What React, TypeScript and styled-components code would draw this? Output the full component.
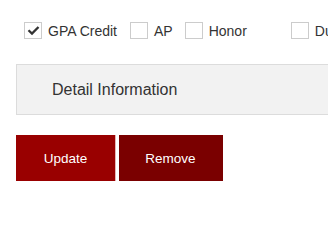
import styled, { createGlobalStyle } from "styled-components";

const GlobalStyle = createGlobalStyle`
    html, body {
        margin: 0;
        padding: 0;
        background: #fff;
        overflow: hidden;
    }
    body {
        font-family: "Liberation Sans", Arial, sans-serif;
        color: #333;
    }
`;

const Page = styled.div`
    width: 328px;
    height: 208px;
    padding: 22px 0 0 16px;
    box-sizing: border-box;
`;

const OptionRow = styled.div`
    display: flex;
    align-items: center;
    height: 17px;
    padding-left: 8px;
    white-space: nowrap;
`;

const Option = styled.label<{ spacing: number }>`
    display: flex;
    align-items: center;
    gap: 6px;
    margin-right: ${(p) => p.spacing}px;
    font-size: 14px;
    color: #333;
`;

const Box = styled.span`
    width: 16px;
    height: 15px;
    border: 1px solid #ccc;
    background: #fff;
    display: flex;
    align-items: center;
    justify-content: center;
`;

const DetailPanel = styled.div`
    margin-top: 25px;
    width: 420px;
    height: 51px;
    box-sizing: border-box;
    background: #f2f2f2;
    border: 1px solid #dcdcdc;
    display: flex;
    align-items: center;
    padding-left: 35px;
    font-size: 16px;
    color: #333;
`;

const Actions = styled.div`
    display: flex;
    gap: 3px;
    margin-top: 20px;
`;

const Button = styled.button<{ dark?: boolean; width: number }>`
    width: ${(p) => p.width}px;
    height: 46px;
    border: none;
    border-right: 1px solid ${(p) => (p.dark ? "#7a0000" : "#e8b4b4")};
    background: ${(p) => (p.dark ? "#7a0000" : "#990000")};
    color: #fff;
    font-family: "Liberation Sans", Arial, sans-serif;
    font-size: 13.5px;
    padding: 0;
`;

const Check = () => (
    <svg width="13" height="11" viewBox="0 0 13 11">
        <path d="M1.5 5.2 L5 8.6 L11.5 2" fill="none" stroke="#333" strokeWidth="2.3" />
    </svg>
);

const App = () => {
    return (
        <Page>
            <GlobalStyle />
            <OptionRow>
                <Option spacing={13}>
                    <Box>
                        <Check />
                    </Box>
                    GPA Credit
                </Option>
                <Option spacing={12}>
                    <Box />
                    AP
                </Option>
                <Option spacing={44}>
                    <Box />
                    Honor
                </Option>
                <Option spacing={0}>
                    <Box />
                    Dual Enrollment
                </Option>
            </OptionRow>
            <DetailPanel>Detail Information</DetailPanel>
            <Actions>
                <Button width={100}>Update</Button>
                <Button dark width={104}>
                    Remove
                </Button>
            </Actions>
        </Page>
    );
};

export default App;
